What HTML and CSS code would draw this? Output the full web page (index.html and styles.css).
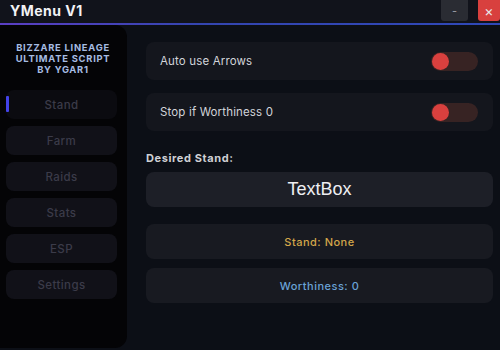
FILE: index.html
```html
<!DOCTYPE html>
<html>
  <head>
    <meta name="viewport" content="width=device-width, initial-scale=1.0" />
    <link rel="stylesheet" href="styles.css">
  </head>
  <body>
    <header class="titlebar">
      <span class="title">YMenu V1</span>
      <div class="window-buttons">
        <button class="btn-min">-</button>
        <button class="btn-close">×</button>
      </div>
    </header>

    <div class="window">
      <aside class="sidebar">
        <div class="brand">BIZZARE LINEAGE<br>ULTIMATE SCRIPT<br>BY YGAR1</div>
        <nav class="tabs">
          <div class="tab active">Stand</div>
          <div class="tab">Farm</div>
          <div class="tab">Raids</div>
          <div class="tab">Stats</div>
          <div class="tab">ESP</div>
          <div class="tab">Settings</div>
        </nav>
      </aside>

      <main class="content">
        <div class="card option">
          <span>Auto use Arrows</span>
          <div class="toggle"><div class="knob"></div></div>
        </div>
        <div class="card option">
          <span>Stop if Worthiness 0</span>
          <div class="toggle"><div class="knob"></div></div>
        </div>

        <div class="label">Desired Stand:</div>
        <div class="textbox">TextBox</div>
        <div class="card info stand">Stand: None</div>
        <div class="card info worth">Worthiness: 0</div>
      </main>
    </div>
  </body>
</html>
```

FILE: styles.css
```css
:root {
  --bg-main: #0c0f16;
  --bg-title: #11131b;
  --bg-side: #040406;
  --bg-card: #14161d;
  --bg-input: #1d1f27;
  --tab-bg: #111118;
  --tab-text: #3b3b49;
  --text: #d2d4da;
  --accent: #4343ea;
  --red: #d8403e;
}

* {
  box-sizing: border-box;
  margin: 0;
  padding: 0;
}

body {
  width: 500px;
  height: 350px;
  overflow: hidden;
  background: var(--bg-main);
  font-family: Inter, "Noto Sans", sans-serif;
  color: var(--text);
}

.titlebar {
  height: 25px;
  background: var(--bg-title);
  border-bottom: 2px solid #3443a8;
  border-image: linear-gradient(90deg, #5b3fc4, #3445b0 40%, #2f48b8) 1;
  display: flex;
  justify-content: space-between;
  align-items: flex-start;
}

.title {
  font-size: 14px;
  font-weight: 700;
  color: #f2f2f5;
  padding: 2px 0 0 10px;
  letter-spacing: 0.5px;
}

.window-buttons {
  display: flex;
  gap: 10px;
}

.window-buttons button {
  border: none;
  height: 21px;
  font-family: Inter, sans-serif;
  color: #e8e8ec;
  font-size: 11px;
  border-radius: 0 0 3px 3px;
}

.btn-min {
  width: 27px;
  background: #2a2c33;
  color: #9a9ca4 !important;
}

.btn-close {
  width: 22px;
  background: var(--red);
  font-size: 14px !important;
}

.window {
  display: flex;
  height: 323px;
}

.sidebar {
  width: 127px;
  height: 323px;
  background: var(--bg-side);
  border-radius: 0 12px 12px 0;
  padding: 17px 10px 0 6px;
}

.brand {
  text-align: center;
  font-size: 9.4px;
  font-weight: 700;
  line-height: 11px;
  color: #a6bce2;
  letter-spacing: 0.75px;
  padding-left: 3px;
}

.tabs {
  margin-top: 15px;
  display: flex;
  flex-direction: column;
  gap: 7px;
}

.tab {
  height: 29px;
  border-radius: 8px;
  background: var(--tab-bg);
  color: var(--tab-text);
  font-size: 11.5px;
  font-weight: 500;
  letter-spacing: 0.4px;
  display: flex;
  align-items: center;
  justify-content: center;
  position: relative;
}

.tab.active {
  background: #0b0b10;
}

.tab.active::before {
  content: '';
  position: absolute;
  left: 0;
  top: 6px;
  width: 3px;
  height: 16px;
  border-radius: 1px;
  background: var(--accent);
}

.content {
  flex: 1;
  padding: 17px 7px 0 19px;
  display: flex;
  flex-direction: column;
}

.card {
  background: var(--bg-card);
  border-radius: 8px;
}

.option {
  height: 38px;
  display: flex;
  align-items: center;
  justify-content: space-between;
  padding: 0 15px 0 14px;
  font-size: 11.5px;
  letter-spacing: 0.15px;
  margin-bottom: 13px;
}

.toggle {
  width: 47px;
  height: 19px;
  border-radius: 10px;
  background: #372323;
  padding: 1px;
}

.knob {
  width: 17px;
  height: 17px;
  border-radius: 50%;
  background: var(--red);
}

.label {
  font-size: 11px;
  line-height: 13px;
  font-weight: 700;
  letter-spacing: 0.6px;
  color: #cfd0d4;
  margin: 8px 0 7px 0;
}

.textbox {
  height: 35px;
  border-radius: 8px;
  background: var(--bg-input);
  font-family: "Liberation Sans", Arial, sans-serif;
  font-size: 18px;
  color: #eeeef2;
  display: flex;
  align-items: center;
  justify-content: center;
  margin-bottom: 17px;
}

.info {
  height: 35px;
  display: flex;
  align-items: center;
  justify-content: center;
  font-size: 11px;
  font-weight: 500;
  letter-spacing: 0.5px;
  margin-bottom: 9px;
  background: #181a21;
}

.stand {
  color: #d3a64a;
}

.worth {
  color: #6aa2d6;
}
```
